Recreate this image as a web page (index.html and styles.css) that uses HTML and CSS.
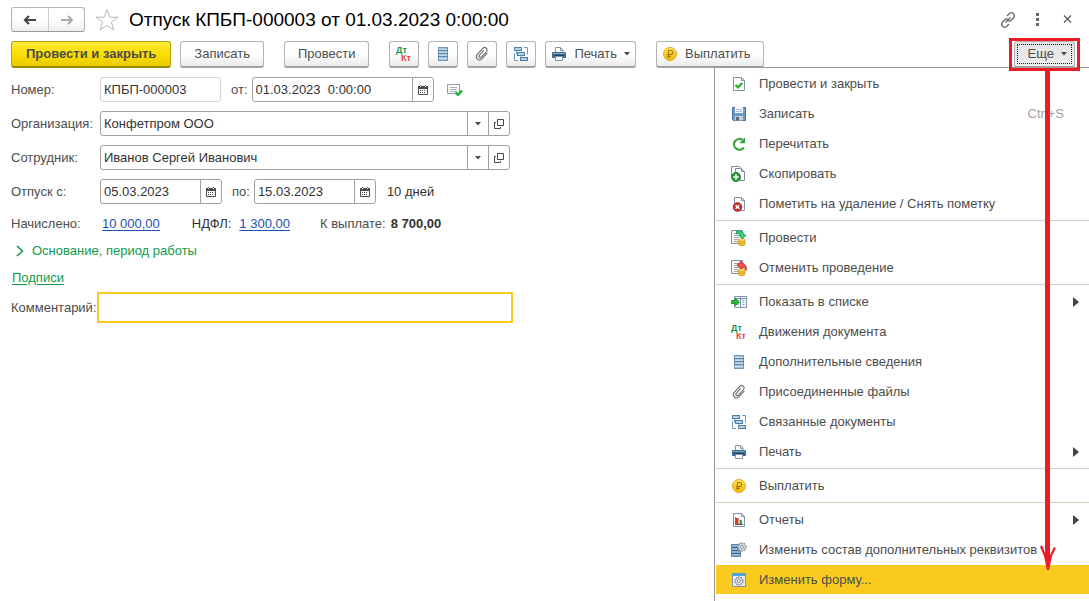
FILE: index.html
```html
<!DOCTYPE html>
<html lang="ru">
<head>
<meta charset="utf-8">
<title>Отпуск КПБП-000003</title>
<link rel="stylesheet" href="styles.css">
</head>
<body>
<svg class="sprite" aria-hidden="true">
  <defs>
    <linearGradient id="coinFill" x1="0" y1="0" x2="0" y2="1"><stop offset="0" stop-color="#ffe45a"/><stop offset="1" stop-color="#f2b90d"/></linearGradient>
  </defs>
  <symbol id="sheet" viewBox="0 0 16 16">
    <rect x="3.500" y="1.500" width="9" height="13" fill="#a9c8de" stroke="#7396b0"/>
    <path d="M3 4.500h10M3 7.500h10M3 10.500h10" stroke="#5f87a5"/>
    <path d="M4 3.500h8M4 6.500h8M4 9.500h8M4 12.500h8" stroke="#c5dcec"/>
  </symbol>
  <symbol id="clip" viewBox="0 0 16 16">
    <path d="M11.200 4v7.500a3.200 3.200 0 0 1-6.400 0V3.200a2.400 2.400 0 0 1 4.800 0v7.600a1.400 1.400 0 0 1-2.800 0V4.500" transform="rotate(42 8 8)" fill="none" stroke="#6c6c6c" stroke-width="1.100" stroke-linecap="round"/>
  </symbol>
  <symbol id="links" viewBox="0 0 16 16">
    <g fill="#b5d3e7" stroke="#4a7ea3"><rect x="1.500" y="1.500" width="7" height="3"/><rect x="4.500" y="6.500" width="7" height="3"/><rect x="7.500" y="11.500" width="7" height="3"/></g>
    <path d="M11 1.500h3.500v7M1.500 7v7.500H5M3.500 5v3h1M8 9.500v3" fill="none" stroke="#6d9cbd"/>
  </symbol>
  <symbol id="printer" viewBox="0 0 16 16">
    <path d="M4.500 6V1.500h5l2.500 2.500v2" fill="#fff" stroke="#8593a4"/><path d="M9.500 1.500v3H12" fill="none" stroke="#8593a4"/>
    <rect x="1" y="6" width="14" height="6" rx="1" fill="#3b6b92"/><path d="M2 7.500h12" stroke="#7ea5c2"/><path d="M3 9.500h10" stroke="#1f4260"/>
    <path d="M4.500 10.500h7v4h-7z" fill="#fff" stroke="#8593a4"/>
  </symbol>
  <symbol id="coin" viewBox="0 0 16 16">
    <circle cx="8" cy="8" r="6.500" fill="url(#coinFill)" stroke="#e0a91a"/>
    <path d="M6.500 12V4.500h2.200a2 2 0 0 1 0 4H5M5 10.300h4" fill="none" stroke="#ad7d0c" stroke-width="1.200"/>
  </symbol>
  <symbol id="calendar" viewBox="0 0 10 10">
    <path d="M.5 2v7.500h9V2" fill="#fff" stroke="#4a4a4a"/><path d="M0 1h10v3H0z" fill="#4a4a4a"/><path d="M2.500 0v2M7.500 0v2" stroke="#fff"/><path d="M2.500 0v1M7.500 0v1" stroke="#4a4a4a"/>
    <path d="M2 5.500h6M2 7.500h6" stroke="#4a4a4a" stroke-dasharray="1 1"/>
  </symbol>
  <symbol id="open" viewBox="0 0 10 10">
    <path d="M3.500.5h6v6h-6zM2 3.500H.5v6h6V8" fill="none" stroke="#4a4a4a"/>
  </symbol>
  <symbol id="caret" viewBox="0 0 6 4"><path d="M0 0h6L3 3.500z" fill="#4a4a4a"/></symbol>
  <symbol id="sub" viewBox="0 0 6 10"><path d="M0 0l6 5-6 5z" fill="#444"/></symbol>
  <symbol id="docCheck" viewBox="0 0 16 16">
    <path d="M2.500 1.500h8l3 3v10h-11z" fill="#fff" stroke="#8190a3"/><path d="M10.500 1.500v3h3" fill="none" stroke="#8190a3"/>
    <path d="M4.500 9 7 11.300 11.200 7" fill="none" stroke="#23b02f" stroke-width="2.300"/>
  </symbol>
  <symbol id="floppy" viewBox="0 0 16 16">
    <path d="M1.500 1.500h13v13h-12l-1-1z" fill="#6c9bc8" stroke="#476f99"/><path d="M4 1h8v6H4z" fill="#f4f8fc"/><path d="M5 3.500h6M5 5.500h6" stroke="#a3bdd4"/><path d="M4 10h8v4.500H4z" fill="#cbd1d6"/><path d="M5 11h3v3.500H5z" fill="#5c6873"/>
  </symbol>
  <symbol id="reload" viewBox="0 0 16 16">
    <path d="M12.800 11.500A5.400 5.400 0 1 1 11.500 3.800" fill="none" stroke="#32a63c" stroke-width="2.200"/><path d="M14 1.500v5.700H8.500z" fill="#32a63c"/>
  </symbol>
  <symbol id="copy" viewBox="0 0 16 16">
    <path d="M.5 11V.5h8L10 2" fill="#fff" stroke="#7f8fa3"/><path d="M4.500 2.500h6l3 3v9h-9z" fill="#fff" stroke="#7f8fa3"/><path d="M10.500 2.500v3h3" fill="none" stroke="#7f8fa3"/>
    <circle cx="5" cy="11" r="4.500" fill="#2f9c3b" stroke="#227d2d"/><path d="M5 8.200v5.600M2.200 11h5.600" stroke="#fff" stroke-width="1.500"/>
  </symbol>
  <symbol id="remove" viewBox="0 0 16 16">
    <path d="M3.500 1.500h7l3 3v10h-10z" fill="#fff" stroke="#8190a3"/><path d="M10.500 1.500v3h3" fill="none" stroke="#8190a3"/>
    <circle cx="6.500" cy="11" r="4.300" fill="#cf2e36" stroke="#ad2029"/><path d="m4.700 9.200 3.600 3.600m0-3.600-3.600 3.600" stroke="#fff" stroke-width="1.400"/>
  </symbol>
  <symbol id="page" viewBox="0 0 16 16">
    <path d="M.5.5h11v13H.5z" fill="#f7f9fb" stroke="#8190a3"/><path d="M3 3.500h6M3 5.500h6M3 7.500h5M3 9.500h4M3 11.500h4" stroke="#9aa5b3"/>
    <path d="M7.500 10v4.500c0 1.300 6.500 1.300 6.500 0V10z" fill="#f2c038" stroke="#cf9713" stroke-width=".7"/><ellipse cx="10.750" cy="10" rx="3.200" ry="1.300" fill="#ffe37a" stroke="#cf9713" stroke-width=".7"/><path d="M7.500 12.500c1 1 5.500 1 6.500 0" fill="none" stroke="#cf9713" stroke-width=".7"/>
  </symbol>
  <symbol id="post" viewBox="0 0 16 16">
    <use href="#page"/><path d="M5.500 4V1.200c4-1.700 7 .3 7.300 3.800H15l-3.700 4-3.500-4h2.200C9.700 3.300 8 2.800 5.500 4z" fill="#2fd57b" stroke="#13964a" stroke-width=".8"/>
  </symbol>
  <symbol id="unpost" viewBox="0 0 16 16">
    <use href="#page"/><path d="M6 5 10.300.8V3c4 .2 5.500 3.500 5 7.500-1-2.500-2.500-3.700-5-3.500v2.200z" fill="#f0524a" stroke="#c32a2b" stroke-width=".8"/>
  </symbol>
  <symbol id="inList" viewBox="0 0 16 16">
    <path d="M3.500 2.500h12v11h-12zM9.500 2.500v11M3.500 4.500h12" fill="#f6f9fc" stroke="#7f95ac"/><path d="M5.500 6.500h2M5.500 8.500h2M5.500 10.500h2M11.500 6.500h2M11.500 8.500h2M11.500 10.500h2" stroke="#8fa2b6"/>
    <path d="M.5 6.500H4V4l4.300 4L4 12V9.500H.5z" fill="#1fc32a" stroke="#15841c" stroke-width=".8"/>
  </symbol>
  <symbol id="report" viewBox="0 0 16 16">
    <path d="M2.500 1.500h8l3 3v10h-11z" fill="#fff" stroke="#8190a3"/><path d="M10.500 1.500v3h3" fill="none" stroke="#8190a3"/><path d="M4 5h1v8H4z" fill="#777"/><path d="M5 6h2.500v6H5z" fill="#e03535"/><path d="M8.500 8H11v4H8.500z" fill="#2aa83a"/><path d="M4 12.500h8" stroke="#555"/>
  </symbol>
  <symbol id="gear" viewBox="0 0 16 16">
    <circle cx="8" cy="8" r="5.200" fill="#e2e6ea" stroke="#7f858c" stroke-width="2" stroke-dasharray="2 1.270"/><circle cx="8" cy="8" r="4.500" fill="#e2e6ea" stroke="#9a9fa5" stroke-width=".8"/><circle cx="8" cy="8" r="2" fill="#fff" stroke="#6f757b"/>
  </symbol>
  <symbol id="props" viewBox="0 0 16 16">
    <path d="M.5 2.500h9v12h-9z" fill="#8fb4d1" stroke="#5b86a9"/><path d="M1 5.500h8M1 8.500h9M1 11.500h8" stroke="#376b95"/><use href="#gear" x="5" y="-1" width="12" height="12"/>
  </symbol>
  <symbol id="form" viewBox="0 0 16 16">
    <path d="M1.500 1.500h13v13h-13z" fill="#e9eff4" stroke="#8393a5"/><path d="M1 1h14v3H1z" fill="#4da3da"/><use href="#gear" x="2" y="3" width="12" height="12"/>
  </symbol>
</svg>

<header class="titlebar">
  <div class="nav">
    <button class="nav-btn" aria-label="Назад"><svg width="16" height="12" viewBox="0 0 16 12"><path d="M7 2 3 6l4 4M3 6h11" fill="none" stroke="#444" stroke-width="2.200"/></svg></button>
    <button class="nav-btn" aria-label="Вперед"><svg width="16" height="12" viewBox="0 0 16 12"><path d="m9 2 4 4-4 4M13 6H2" fill="none" stroke="#aaa" stroke-width="2"/></svg></button>
  </div>
  <button class="plain" aria-label="В избранное"><svg width="24" height="24" viewBox="0 0 24 24"><path d="M12 1.500 14.700 9.200H23l-6.600 4.900 2.400 7.900L12 17.200 5.200 22l2.400-7.900L1 9.200h8.300z" fill="#fff" stroke="#b4bac2"/></svg></button>
  <h1 class="title">Отпуск КПБП-000003 от 01.03.2023 0:00:00</h1>
  <div class="window-tools">
    <button class="plain" aria-label="Получить ссылку"><svg width="18" height="18" viewBox="0 0 18 18"><g fill="none" stroke="#666" stroke-width="1.300"><path d="m8 5 2.500-2.500c2.500-2.200 6.600 1.200 4.200 4.200L12.200 9.200c-1 1-2.400 1-3.400.5"/><path d="m10 13-2.500 2.500c-2.500 2.200-6.600-1.200-4.200-4.200l2.500-2.500c1-1 2.400-1 3.400-.5M6.500 11.500l5-5"/></g></svg></button>
    <button class="plain" aria-label="Меню"><svg width="18" height="18" viewBox="0 0 18 18"><path d="M7 3h3v3H7zM7 8h3v3H7zM7 13h3v3H7z" transform="translate(0 -1)" fill="#666"/></svg></button>
    <button class="plain" aria-label="Закрыть"><svg width="18" height="18" viewBox="0 0 18 18"><path d="m5 4.500 7 7m0-7-7 7" stroke="#555" stroke-width="1.200"/></svg></button>
  </div>
</header>

<div class="toolbar" role="toolbar">
  <div class="group">
    <button class="btn primary">Провести и закрыть</button>
    <button class="btn">Записать</button>
  </div>
  <button class="btn">Провести</button>
  <div class="group">
    <button class="btn icon-only" aria-label="Движения документа"><svg class="icon"><text x="0" y="7" class="glyph glyph-green">Дт</text><text x="5" y="15" class="glyph glyph-red">Кт</text></svg></button>
    <button class="btn icon-only" aria-label="Дополнительные сведения"><svg class="icon"><use href="#sheet"/></svg></button>
    <button class="btn icon-only" aria-label="Присоединенные файлы"><svg class="icon"><use href="#clip"/></svg></button>
    <button class="btn icon-only" aria-label="Связанные документы"><svg class="icon"><use href="#links"/></svg></button>
    <button class="btn with-icon"><svg class="icon"><use href="#printer"/></svg>Печать<svg class="caret"><use href="#caret"/></svg></button>
  </div>
  <button class="btn with-icon pay"><svg class="icon"><use href="#coin"/></svg>Выплатить</button>

  <div class="more">
    <div class="menu" role="menu">
      <button class="item" role="menuitem"><svg class="icon"><use href="#docCheck"/></svg>Провести и закрыть</button>
      <button class="item" role="menuitem"><svg class="icon"><use href="#floppy"/></svg>Записать<kbd class="hotkey">Ctrl+S</kbd></button>
      <button class="item" role="menuitem"><svg class="icon"><use href="#reload"/></svg>Перечитать</button>
      <button class="item" role="menuitem"><svg class="icon"><use href="#copy"/></svg>Скопировать</button>
      <button class="item" role="menuitem"><svg class="icon"><use href="#remove"/></svg>Пометить на удаление / Снять пометку</button>
      <hr class="sep">
      <button class="item" role="menuitem"><svg class="icon"><use href="#post"/></svg>Провести</button>
      <button class="item" role="menuitem"><svg class="icon"><use href="#unpost"/></svg>Отменить проведение</button>
      <hr class="sep">
      <button class="item" role="menuitem"><svg class="icon"><use href="#inList"/></svg>Показать в списке<svg class="sub"><use href="#sub"/></svg></button>
      <button class="item" role="menuitem"><svg class="icon"><text x="0" y="7" class="glyph glyph-green">Дт</text><text x="5" y="15" class="glyph glyph-red">Кт</text></svg>Движения документа</button>
      <button class="item" role="menuitem"><svg class="icon"><use href="#sheet"/></svg>Дополнительные сведения</button>
      <button class="item" role="menuitem"><svg class="icon"><use href="#clip"/></svg>Присоединенные файлы</button>
      <button class="item" role="menuitem"><svg class="icon"><use href="#links"/></svg>Связанные документы</button>
      <button class="item" role="menuitem"><svg class="icon"><use href="#printer"/></svg>Печать<svg class="sub"><use href="#sub"/></svg></button>
      <hr class="sep">
      <button class="item" role="menuitem"><svg class="icon"><use href="#coin"/></svg>Выплатить</button>
      <hr class="sep">
      <button class="item" role="menuitem"><svg class="icon"><use href="#report"/></svg>Отчеты<svg class="sub"><use href="#sub"/></svg></button>
      <button class="item" role="menuitem"><svg class="icon"><use href="#props"/></svg>Изменить состав дополнительных реквизитов</button>
      <button class="item active" role="menuitem"><svg class="icon"><use href="#form"/></svg>Изменить форму...</button>
    </div>
    <button class="btn more-btn" aria-haspopup="true" aria-expanded="true"><span class="focus-ring">Еще<svg class="caret"><use href="#caret"/></svg></span></button>
    <div class="mark-frame"></div>
    <svg class="mark-arrow" width="18" height="504" viewBox="0 0 18 504"><path d="M6 0h5v487l4-8 2 1-4 8-3 14H8L5 488l-4-9 2-2 3 8z" fill="#ed1c24"/></svg>
  </div>
</div>

<main class="form">
  <div class="row">
    <label class="label" for="num">Номер:</label>
    <input class="field readonly num" id="num" value="КПБП-000003" readonly>
    <label class="inline-label" for="date">от:</label>
    <div class="field combo datetime"><input class="value" id="date" value="01.03.2023&nbsp; 0:00:00"><button class="part" aria-label="Выбрать дату"><svg class="cal"><use href="#calendar"/></svg></button></div>
    <svg class="status" width="16" height="14" viewBox="0 0 16 14"><path d="M.5 1.500h12v9H.5z" fill="#fff" stroke="#8d9cae"/><path d="M3 4.500h7M3 6.500h7M3 8.500h7" stroke="#a4afbc"/><path d="m8.500 9.500 2.500 2.300 4-4.300" fill="none" stroke="#22b232" stroke-width="2.400"/></svg>
  </div>
  <div class="row">
    <label class="label" for="org">Организация:</label>
    <div class="field combo wide"><input class="value" id="org" value="Конфетпром ООО"><button class="part" aria-label="Выбрать"><svg class="caret"><use href="#caret"/></svg></button><button class="part" aria-label="Открыть"><svg class="cal"><use href="#open"/></svg></button></div>
  </div>
  <div class="row">
    <label class="label" for="emp">Сотрудник:</label>
    <div class="field combo wide"><input class="value" id="emp" value="Иванов Сергей Иванович"><button class="part" aria-label="Выбрать"><svg class="caret"><use href="#caret"/></svg></button><button class="part" aria-label="Открыть"><svg class="cal"><use href="#open"/></svg></button></div>
  </div>
  <div class="row">
    <label class="label" for="from">Отпуск с:</label>
    <div class="field combo date"><input class="value" id="from" value="05.03.2023"><button class="part" aria-label="Выбрать дату"><svg class="cal"><use href="#calendar"/></svg></button></div>
    <label class="inline-label" for="to">по:</label>
    <div class="field combo date"><input class="value" id="to" value="15.03.2023"><button class="part" aria-label="Выбрать дату"><svg class="cal"><use href="#calendar"/></svg></button></div>
    <span class="days">10 дней</span>
  </div>
  <div class="totals">
    <span class="label">Начислено:</span>
    <a class="sum" href="#">10 000,00</a>
    <span class="dark">НДФЛ:</span>
    <a class="sum" href="#">1 300,00</a>
    <span>К выплате:</span>
    <strong class="dark">8 700,00</strong>
  </div>
  <button class="expander"><svg width="8" height="12" viewBox="0 0 8 12"><path d="m1 1 5.500 5L1 11" fill="none" stroke="#109a4e" stroke-width="1.600"/></svg>Основание, период работы</button>
  <a class="signatures" href="#">Подписи</a>
  <div class="row">
    <label class="label" for="comment">Комментарий:</label>
    <input class="comment" id="comment">
  </div>
</main>
</body>
</html>
```

FILE: styles.css
```css
* { box-sizing: border-box; }

body {
  min-height: 100vh;
  margin: 0;
  background: #fff;
  color: #4d4d4d;
  font: 13px/16px "Liberation Sans", Arial, sans-serif;
}

button, input { font: inherit; color: inherit; margin: 0; }
svg { display: block; flex: none; }
.sprite { position: absolute; width: 0; height: 0; }
.icon { width: 16px; height: 16px; overflow: visible; }
.caret { width: 6px; height: 4px; }
.cal { width: 10px; height: 10px; }
.glyph { font: bold 9px "Liberation Sans", Arial, sans-serif; }
.glyph-green { fill: #12924a; }
.glyph-red { fill: #e0443e; }

.titlebar {
  display: flex;
  align-items: center;
  gap: 10px;
  padding: 7px 12px 0 11px;
}
.nav {
  display: flex;
  border: 1px solid #b5b5b5;
  border-bottom-color: #999;
  border-radius: 3px;
  background: linear-gradient(#fff 50%, #eee);
}
.nav-btn {
  display: flex;
  align-items: center;
  justify-content: center;
  width: 36px;
  height: 23px;
  padding: 0;
  border: 0;
  background: none;
}
.nav-btn + .nav-btn { border-left: 1px solid #ccc; }
.plain { display: block; padding: 0; border: 0; background: none; }
.title {
  margin: 0;
  color: #000;
  font-size: 19px;
  line-height: 24px;
  font-weight: normal;
}
.window-tools { display: flex; gap: 12px; margin-left: auto; }

.toolbar {
  display: flex;
  gap: 20px;
  padding: 9px 14px 0 11px;
}
.group { display: flex; gap: 9px; }
.btn {
  display: flex;
  align-items: center;
  justify-content: center;
  height: 27px;
  padding: 0 13px;
  border: 1px solid #b3b3b3;
  border-bottom: 2px solid #a0a0a0;
  border-radius: 3px;
  background: linear-gradient(#fff 50%, #ebebeb);
  white-space: nowrap;
}
.primary {
  padding: 0 14px;
  border-color: #b8a012;
  border-bottom-color: #998500;
  background: linear-gradient(#ffe838, #fbdf00 50%, #e9cc00);
  font-weight: bold;
}
.icon-only { width: 30px; padding: 0; }
.with-icon { gap: 7px; padding: 0 5px; }
.pay { padding-right: 12px; }

.more { position: relative; margin-left: auto; }
.more-btn {
  position: relative;
  padding: 0 2px;
  background: linear-gradient(#e2e2e2, #efefef);
}
.focus-ring {
  display: flex;
  align-items: center;
  gap: 7px;
  height: 20px;
  padding: 0 4px 0 10px;
  border: 1px dotted #222;
}
.mark-frame {
  position: absolute;
  inset: -3px -5px -3px -5px;
  border: 3px solid #ed1c24;
  pointer-events: none;
}
.mark-arrow { position: absolute; top: 27px; right: 18px; pointer-events: none; }

.menu {
  position: absolute;
  top: 26px;
  right: -14px;
  width: 375px;
  padding: 1px 0 6px 1px;
  border: solid #999;
  border-width: 1px 0 0 1px;
  background: #fff;
}
.item {
  display: flex;
  align-items: center;
  gap: 12px;
  width: 100%;
  height: 30px;
  padding: 0 10px 0 15px;
  border: 0;
  border-bottom: 1px solid transparent;
  background: none;
  background-clip: padding-box;
  text-align: left;
  white-space: nowrap;
}
.active { background-color: #facb1e; }
.hotkey { margin-left: auto; padding-right: 15px; color: #a0a0a0; font: inherit; }
.sub { width: 6px; height: 10px; margin-left: auto; }
.sep { height: 4px; margin: 0; border: 0; padding: 1px 0 2px; background: #d5d0bd content-box; }

.form {
  display: flex;
  flex-direction: column;
  align-items: flex-start;
  gap: 9px;
  max-width: 510px;
  padding: 9px 0 0 11px;
}
.row, .totals { display: flex; align-items: center; width: 100%; }
.label { flex: none; width: 89px; white-space: nowrap; }
.inline-label { padding: 0 4px 0 10px; }
.field {
  height: 25px;
  border: 1px solid #a0a0a0;
  border-radius: 3px;
  background: #fff;
  color: #333;
}
.readonly { padding: 0 3px; border-color: #d5d5d5; }
.num { width: 121px; }
.combo { display: flex; overflow: hidden; }
.value { flex: 1; min-width: 0; padding: 0 3px; border: 0; outline: 0; background: none; }
.part {
  display: flex;
  align-items: center;
  justify-content: center;
  width: 21px;
  padding: 0;
  border: 0;
  border-left: 1px solid #a0a0a0;
  background: none;
}
.datetime { width: 182px; }
.date { width: 122px; }
.wide { flex: 1; }
.status { margin-left: 13px; }
.days { padding-left: 11px; color: #333; }
.totals { padding: 3px 0 1px; }
.totals .label { width: 91px; }
.dark { color: #333; }
.sum { margin-right: 30px; color: #1c50b5; text-underline-offset: 2px; }
.sum + .dark { margin-right: 8px; margin-left: 2px; }
.totals strong { margin-left: 5px; }
.expander {
  display: flex;
  align-items: center;
  gap: 8px;
  padding: 0 0 0 5px;
  border: 0;
  background: none;
  color: #109a4e;
  line-height: 18px;
}
.signatures { padding-left: 1px; color: #109a4e; line-height: 17px; text-underline-offset: 2px; }
.comment {
  flex: 1;
  min-width: 0;
  height: 25px;
  border: 0;
  outline: 2px solid #facb1e;
  outline-offset: 1px;
}
```
